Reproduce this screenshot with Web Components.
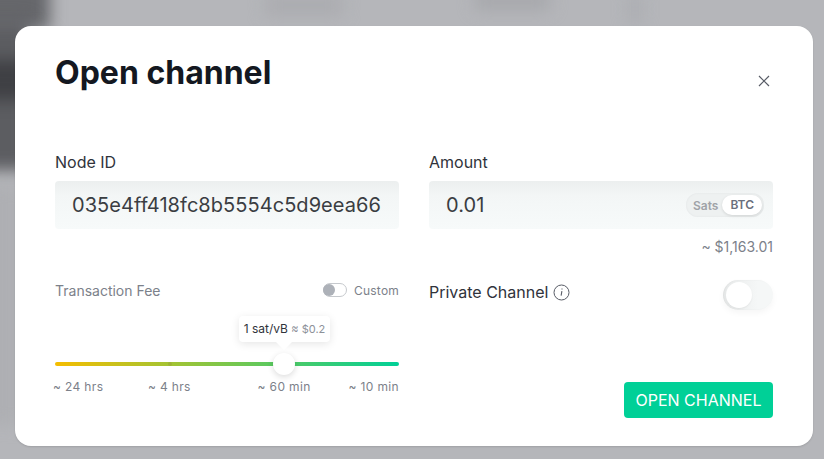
<!DOCTYPE html>
<html>
<head>
<meta charset="utf-8">
<title>Open channel</title>
<style>
  html, body { margin: 0; height: 100%; overflow: hidden; }
  body { font-family: Inter, "Liberation Sans", sans-serif; background: #b5b6ba; }
</style>
</head>
<body>
<blurred-backdrop></blurred-backdrop>
<channel-modal></channel-modal>

<script>
class BlurredBackdrop extends HTMLElement {
  constructor() {
    super();
    this.attachShadow({ mode: 'open' }).innerHTML = `
      <style>
        :host { position: absolute; inset: 0; overflow: hidden; display: block; }
        i { position: absolute; display: block; filter: blur(8px); }
      </style>
      <i style="left:-20px;top:-20px;width:70px;height:50px;background:#66676b"></i>
      <i style="left:-20px;top:20px;width:50px;height:150px;background:#5c5d61"></i>
      <i style="left:-20px;top:60px;width:50px;height:40px;background:#3f4044"></i>
      <i style="left:-20px;top:185px;width:40px;height:240px;background:#aeafb3"></i>
      <i style="left:265px;top:-6px;width:78px;height:22px;background:#abacb0"></i>
      <i style="left:475px;top:-10px;width:75px;height:20px;background:#a7a8ac"></i>
      <i style="left:628px;top:-6px;width:14px;height:30px;background:#abadb1"></i>
    `;
  }
}

class FieldInput extends HTMLElement {
  constructor() {
    super();
    this.attachShadow({ mode: 'open' }).innerHTML = `
      <style>
        :host { display: block; }
        .label { font-size: 16px; line-height: 20px; color: #30333b; margin-bottom: 9px; }
        .box {
          height: 48px; box-sizing: border-box; padding: 0 9px 0 17px;
          display: flex; align-items: center; justify-content: space-between;
          background: linear-gradient(180deg, #ecefef 0%, #f3f6f6 30%, #f7fafa 100%);
          border-radius: 4px; overflow: hidden;
          font-size: 20px; letter-spacing: 0.05px; color: #3a3d42; white-space: nowrap;
        }
      </style>
      <div class="label"><slot name="label"></slot></div>
      <div class="box"><slot></slot><slot name="end"></slot></div>
    `;
  }
}

class UnitSwitch extends HTMLElement {
  constructor() {
    super();
    this.attachShadow({ mode: 'open' }).innerHTML = `
      <style>
        :host {
          display: flex; align-items: center; height: 24px; box-sizing: border-box;
          border-radius: 12px; background: #eef1f1; box-shadow: inset 0 0 2px #dfe2e3;
          font-size: 12px; font-weight: 600; letter-spacing: 0; padding: 2px 2px 2px 7px;
        }
        .off { color: #a0a3a8; margin-right: 4px; }
        .on {
          color: #6a6f7c; background: #fff; border-radius: 10px; height: 20px;
          line-height: 20px; padding: 0 8px; box-shadow: 0 1px 3px rgba(0,0,0,.12);
        }
      </style>
      <span class="off">Sats</span><span class="on">BTC</span>
    `;
  }
}

class FeeSlider extends HTMLElement {
  constructor() {
    super();
    this.attachShadow({ mode: 'open' }).innerHTML = `
      <style>
        :host { display: block; color: #7c818a; }
        .head { display: flex; justify-content: space-between; align-items: center; height: 20px; font-size: 14px; }
        .custom { display: flex; align-items: center; gap: 7px; font-size: 12px; letter-spacing: .2px; }
        .mini {
          width: 24px; height: 14px; box-sizing: border-box; border-radius: 7px;
          border: 1px solid #c6c9cd; position: relative; background: #fff;
        }
        .mini::before {
          content: ""; position: absolute; left: -1px; top: 0; width: 12px; height: 12px;
          border-radius: 50%; background: #adb1b8;
        }
        .track-wrap { position: relative; margin-top: 62px; height: 4px; }
        .track {
          height: 4px; border-radius: 2px;
          background: linear-gradient(90deg, #f5bd00 0%, #00d097 100%);
        }
        .dot { position: absolute; left: 113px; top: 0; width: 4px; height: 4px; border-radius: 50%; background: #9db136; }
        .thumb {
          position: absolute; left: 218px; top: -9px; width: 22px; height: 22px; border-radius: 50%;
          background: #fff; box-shadow: 0 2px 6px rgba(0,0,0,.14);
        }
        .tip {
          position: absolute; left: 184px; top: -46px; height: 26px; width: 91px; box-sizing: border-box;
          background: #fff; border-radius: 4px; box-shadow: 0 2px 8px rgba(0,0,0,.1);
          font-size: 12px; line-height: 26px; text-align: center; color: #30333b; white-space: nowrap;
        }
        .tip::after {
          content: ""; position: absolute; left: 37px; top: 26px;
          border: 8px solid transparent; border-top-color: #fff; border-bottom: 0;
        }
        .tip small { font-size: 11px; color: #8d9199; }
        .ticks { display: flex; font-size: 12px; letter-spacing: .35px; margin-top: 13px; white-space: nowrap; line-height: 16px; }
        .ticks span:nth-child(1) { margin-left: -2px; width: 96px; }
        .ticks span:nth-child(2) { width: 111px; }
        .ticks span:nth-child(3) { width: 92px; }
      </style>
      <div class="head">
        <span>Transaction Fee</span>
        <span class="custom"><span class="mini"></span>Custom</span>
      </div>
      <div class="track-wrap">
        <div class="track"></div>
        <span class="dot"></span>
        <span class="thumb"></span>
        <div class="tip">1 sat/vB <small>≈ $0.2</small></div>
      </div>
      <div class="ticks"><span>~ 24 hrs</span><span>~ 4 hrs</span><span>~ 60 min</span><span>~ 10 min</span></div>
    `;
  }
}

class ToggleSwitch extends HTMLElement {
  constructor() {
    super();
    this.attachShadow({ mode: 'open' }).innerHTML = `
      <style>
        :host {
          display: block; width: 50px; height: 30px; box-sizing: border-box; border-radius: 15px;
          background: linear-gradient(90deg, #e8eaea, #f5f7f7 70%); padding: 2px 3px;
          box-shadow: 0 3px 6px rgba(0,0,0,.04), inset 1px 0 2px rgba(0,0,0,.05);
        }
        span { display: block; width: 26px; height: 26px; border-radius: 50%; background: #fff; box-shadow: 0 1px 2px rgba(0,0,0,.06); }
      </style>
      <span></span>
    `;
  }
}

class ChannelModal extends HTMLElement {
  constructor() {
    super();
    this.attachShadow({ mode: 'open' }).innerHTML = `
      <style>
        :host {
          position: absolute; left: 15px; top: 26px; width: 798px; height: 420px; box-sizing: border-box;
          display: block; background: #fff; border-radius: 16px; padding: 24px 40px 0;
          box-shadow: 0 1px 2px rgba(0,0,0,.12);
        }
        header { display: flex; justify-content: space-between; height: 102px; }
        h1 { margin: 0; font-size: 32px; line-height: 46px; font-weight: 700; color: #141821; }
        .close { margin: 25px 3px 0 0; width: 12px; height: 12px; }
        .grid { display: grid; grid-template-columns: 344px 344px; column-gap: 30px; }
        .usd { text-align: right; font-size: 14px; line-height: 18px; color: #7c818a; margin-top: 9px; }
        .left { margin-top: 51px; }
        .right-bottom { margin-top: 24px; }
        .private { display: flex; justify-content: space-between; align-items: flex-start; font-size: 16px; color: #30333b; line-height: 20px; }
        .private .name { display: flex; align-items: center; gap: 5px; margin-top: 2px; }
        .actions { display: flex; justify-content: flex-end; margin-top: 72px; }
        button {
          font: 400 16px Inter, "Liberation Sans", sans-serif; color: #fff; background: #00d097;
          border: 0; border-radius: 4px; height: 36px; width: 149px; padding: 0;
        }
      </style>
      <header>
        <h1>Open channel</h1>
        <svg class="close" viewBox="0 0 12 12" fill="none" stroke="#585c66" stroke-width="1.2"><path d="M1 1l10 10M11 1L1 11"/></svg>
      </header>
      <div class="grid">
        <field-input>
          <span slot="label">Node ID</span>
          035e4ff418fc8b5554c5d9eea66
        </field-input>
        <field-input>
          <span slot="label">Amount</span>
          0.01
          <unit-switch slot="end"></unit-switch>
        </field-input>
        <div class="left"><fee-slider></fee-slider></div>
        <div>
          <div class="usd">~ $1,163.01</div>
          <div class="right-bottom">
            <div class="private">
              <span class="name">Private Channel
                <svg width="17" height="17" viewBox="0 0 17 17" fill="none" stroke="#585c66"><circle cx="8.5" cy="8.5" r="7.5"/><path d="M8.9 7.2l-.8 4.4M9 4.6v1" stroke-width="1.1"/></svg>
              </span>
              <toggle-switch></toggle-switch>
            </div>
            <div class="actions"><button>OPEN CHANNEL</button></div>
          </div>
        </div>
      </div>
    `;
  }
}

customElements.define('blurred-backdrop', BlurredBackdrop);
customElements.define('field-input', FieldInput);
customElements.define('unit-switch', UnitSwitch);
customElements.define('fee-slider', FeeSlider);
customElements.define('toggle-switch', ToggleSwitch);
customElements.define('channel-modal', ChannelModal);
</script>
</body>
</html>
